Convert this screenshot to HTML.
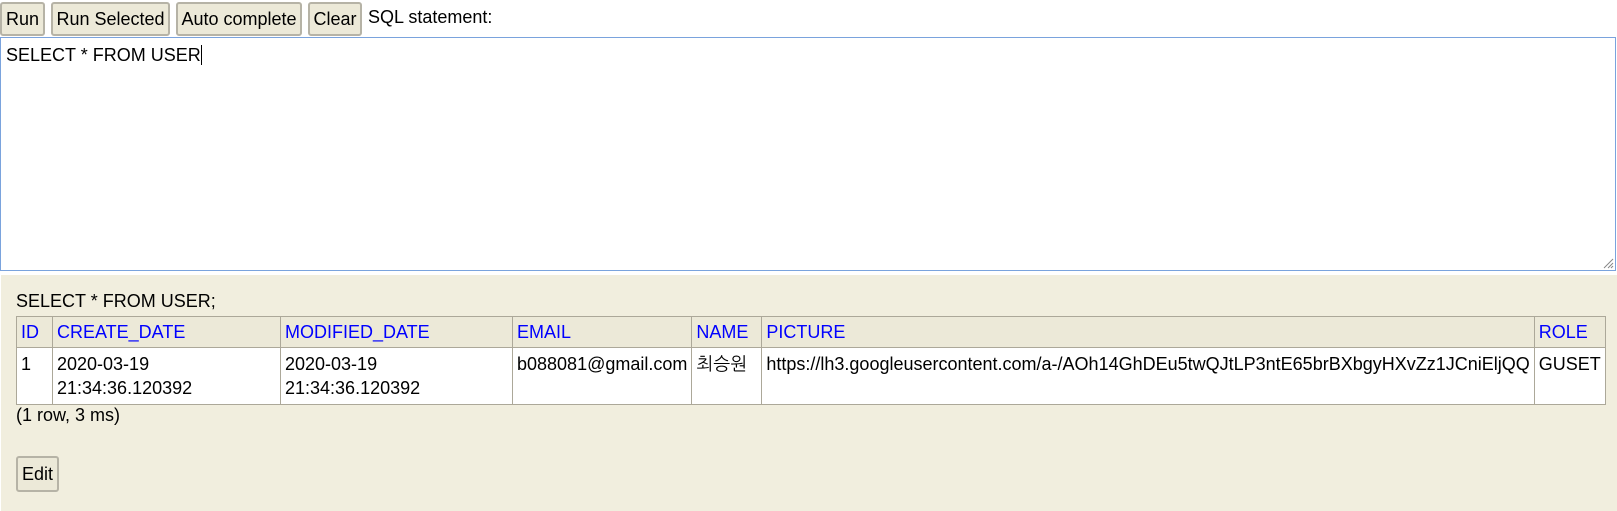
<!DOCTYPE html>
<html><head><meta charset="utf-8"><style>
body{margin:0;width:1617px;height:511px;overflow:hidden;background:#fff;font-family:"Liberation Sans","NanumGothic","Noto Sans CJK KR",sans-serif;font-size:18px;color:#000;position:relative}
.b{position:absolute;top:2px;height:34px;box-sizing:border-box;background:#ece9d8;border:2px solid #b6b3a6;border-radius:3px;line-height:30px;text-align:center;font-size:18px}
#ta{position:absolute;left:0;top:37px;width:1616px;height:234px;box-sizing:border-box;border:1px solid #7aa3dd;background:#fff}
#bot{position:absolute;left:1px;top:275px;width:1616px;height:236px;background:#f1eede}
.t{position:absolute;white-space:nowrap}
table{position:absolute;left:16px;top:316px;border-collapse:collapse;table-layout:fixed}
td,th{border:1px solid #aca899;padding:0 4px;vertical-align:top;text-align:left;font-weight:normal;white-space:nowrap;line-height:24px}
th{background:#ece9d8;color:#0000ff;height:30px;line-height:30px}
td{background:#fff;height:52px;padding-top:4px}
</style></head><body>
<div class="b" style="left:0;width:45px">Run</div>
<div class="b" style="left:51px;width:119px">Run Selected</div>
<div class="b" style="left:176px;width:126px">Auto complete</div>
<div class="b" style="left:308px;width:54px">Clear</div>
<div class="t" style="left:368px;top:7px">SQL statement:</div>
<div id="ta"><div class="t" style="left:5px;top:7px">SELECT * FROM USER<span style="border-left:1px solid #000;margin-left:0">&#8203;</span></div>
<svg style="position:absolute;right:1px;bottom:1px" width="12" height="12"><path d="M11 2L2 11M11 6L6 11M11 9L9 11" stroke="#888" stroke-width="1"/></svg></div>
<div id="bot"></div>
<div class="t" style="left:16px;top:291px">SELECT * FROM USER;</div>
<table>
<colgroup><col style="width:36px"><col style="width:228px"><col style="width:232px"><col style="width:178px"><col style="width:70px"><col style="width:769px"><col style="width:69px"></colgroup>
<tr><th>ID</th><th>CREATE_DATE</th><th>MODIFIED_DATE</th><th>EMAIL</th><th>NAME</th><th>PICTURE</th><th>ROLE</th></tr>
<tr><td>1</td><td>2020-03-19<br>21:34:36.120392</td><td>2020-03-19<br>21:34:36.120392</td><td>b088081@gmail.com</td><td>최승원</td><td>https://lh3.googleusercontent.com/a-/AOh14GhDEu5twQJtLP3ntE65brBXbgyHXvZz1JCniEljQQ</td><td>GUSET</td></tr>
</table>
<div class="t" style="left:16px;top:405px">(1 row, 3 ms)</div>
<div class="b" style="left:16px;top:456px;width:43px;height:36px;line-height:32px">Edit</div>
</body></html>
